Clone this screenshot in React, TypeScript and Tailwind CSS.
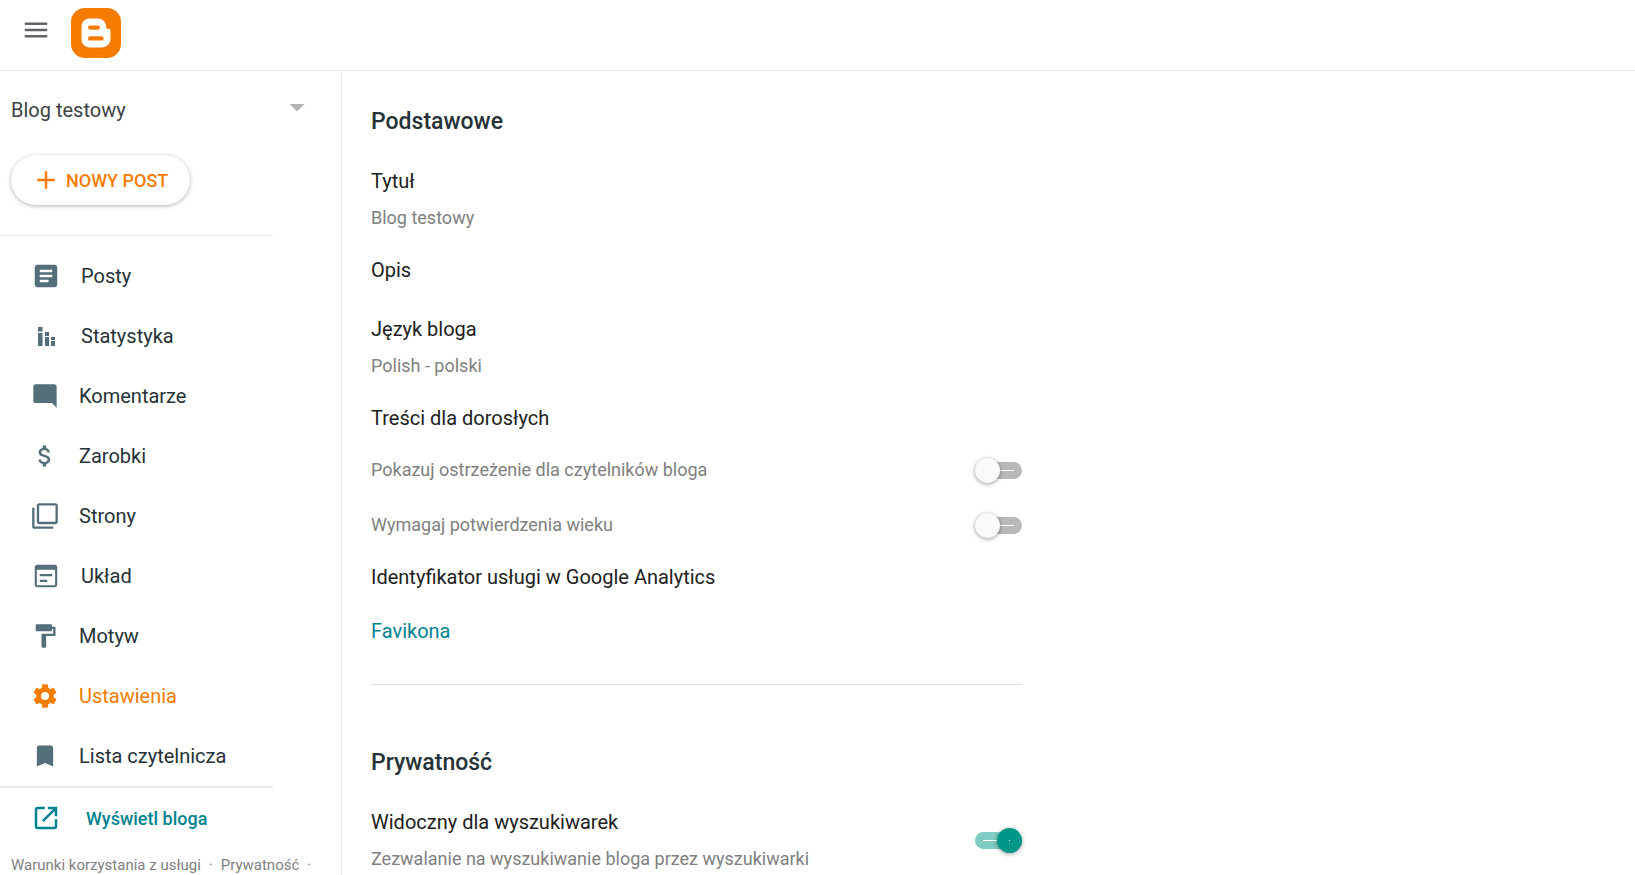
import { useState } from 'react';
import type { ReactNode } from 'react';
import {
  MdAdd,
  MdArrowDropDown,
  MdArticle,
  MdAttachMoney,
  MdBookmark,
  MdFilterNone,
  MdFormatPaint,
  MdMenu,
  MdModeComment,
} from 'react-icons/md';

function BloggerLogo() {
  return (
    <svg className="w-[50px] h-[50px]" viewBox="0 0 50 50" aria-hidden="true">
      <rect width="50" height="50" rx="14" fill="#f57c00" />
      <path
        fill="#b85c00"
        opacity="0.35"
        transform="translate(0 1)"
        d="M18.500 10.500h8c4.700 0 8.700 3.500 8.700 8.200v.8c0 .8.500 1.300 1.300 1.300h1c1.200 0 2 .8 2 2V31c0 4.700-3.800 8.500-8.500 8.500H18.500c-4.700 0-8-3.800-8-8.500V19c0-4.700 3.300-8.500 8-8.500z"
      />
      <path
        fill="#fff"
        d="M18.500 10.500h8c4.700 0 8.700 3.500 8.700 8.200v.8c0 .8.500 1.300 1.300 1.300h1c1.200 0 2 .8 2 2V31c0 4.700-3.800 8.500-8.500 8.500H18.500c-4.700 0-8-3.800-8-8.500V19c0-4.700 3.300-8.500 8-8.500z"
      />
      <rect x="17" y="17.500" width="12" height="4.200" rx="2.100" fill="#f57c00" />
      <rect x="17" y="28.200" width="15.600" height="4.400" rx="2.200" fill="#f57c00" />
    </svg>
  );
}

function StatsIcon({ className }: { className?: string }) {
  return (
    <svg className={className} viewBox="0 0 30 30" fill="currentColor" aria-hidden="true">
      <path d="M7 6h4.500v4.500H7zM7 12h4.500v13H7zM14 11h4v4h-4zM14 16h4v9h-4zM20 16h4v3h-4zM20 20h4v5h-4z" />
    </svg>
  );
}

function LayoutIcon({ className }: { className?: string }) {
  return (
    <svg className={className} viewBox="0 0 24 24" fill="currentColor" aria-hidden="true">
      <path
        fillRule="evenodd"
        d="M19 3H5c-1.100 0-2 .9-2 2v14c0 1.100.9 2 2 2h14c1.100 0 2-.9 2-2V5c0-1.100-.9-2-2-2zm.3 16.300H4.700V7h14.600v12.300zM7 10.300h10v1.800H7zM7 15h6v1.800H7z"
      />
    </svg>
  );
}

function SettingsIcon({ className }: { className?: string }) {
  return (
    <svg className={className} viewBox="0 0 24 24" fill="currentColor" aria-hidden="true">
      <path d="M19.430 12.980c.04-.32.070-.64.070-.98s-.03-.66-.07-.98l2.110-1.650c.19-.15.240-.42.120-.64l-2-3.460c-.12-.22-.39-.3-.61-.22l-2.490 1c-.52-.4-1.080-.73-1.690-.98l-.38-2.650C14.460 2.180 14.250 2 14 2h-4c-.25 0-.46.180-.49.420l-.38 2.650c-.61.250-1.170.590-1.690.980l-2.490-1c-.23-.09-.49 0-.61.220l-2 3.460c-.13.220-.07.490.120.640l2.110 1.650c-.04.320-.07.650-.07.980s.03.660.070.980l-2.110 1.650c-.19.150-.24.420-.12.640l2 3.460c.12.220.39.300.61.220l2.490-1c.52.400 1.080.730 1.690.980l.38 2.650c.03.240.24.420.49.420h4c.25 0 .46-.18.490-.42l.38-2.650c.61-.25 1.170-.59 1.690-.98l2.490 1c.23.090.49 0 .61-.22l2-3.460c.12-.22.070-.49-.12-.64l-2.110-1.650zM12 15.500c-1.930 0-3.500-1.570-3.500-3.500s1.570-3.500 3.500-3.500 3.500 1.570 3.500 3.500-1.570 3.500-3.500 3.500z" />
    </svg>
  );
}

function OpenIcon({ className }: { className?: string }) {
  return (
    <svg className={className} viewBox="0 0 24 24" fill="currentColor" aria-hidden="true">
      <path d="M19 19H5V5h6V3H5c-1.110 0-2 .9-2 2v14c0 1.100.890 2 2 2h14c1.100 0 2-.9 2-2v-6h-2v6zM13.500 3v2h4.090L8.760 13.830l1.410 1.410L19 6.410V10.500h2V3h-7.500z" />
    </svg>
  );
}

const smallIcon = 'w-7 h-7 shrink-0';
const largeIcon = 'w-[30px] h-[30px] shrink-0';

const navItems: { label: string; icon: ReactNode }[] = [
  { label: 'Posty', icon: <MdArticle className={largeIcon} /> },
  { label: 'Statystyka', icon: <StatsIcon className={largeIcon} /> },
  { label: 'Komentarze', icon: <MdModeComment className={smallIcon} /> },
  { label: 'Zarobki', icon: <MdAttachMoney className={smallIcon} /> },
  { label: 'Strony', icon: <MdFilterNone className={smallIcon} /> },
  { label: 'Układ', icon: <LayoutIcon className={largeIcon} /> },
  { label: 'Motyw', icon: <MdFormatPaint className={smallIcon} /> },
  { label: 'Ustawienia', icon: <SettingsIcon className={smallIcon} /> },
  { label: 'Lista czytelnicza', icon: <MdBookmark className={smallIcon} /> },
];

function Toggle({ id, defaultChecked = false }: { id: string; defaultChecked?: boolean }) {
  const [on, setOn] = useState(defaultChecked);

  return (
    <span className="relative flex items-center w-[47px] h-[25px] shrink-0">
      <input
        id={id}
        type="checkbox"
        role="switch"
        checked={on}
        onChange={(e) => setOn(e.target.checked)}
        className="absolute inset-0 z-10 w-full h-full opacity-0 cursor-pointer"
      />
      <span
        className={`flex items-center w-full h-[17px] px-2 rounded-full ${
          on ? 'bg-[#80cbc4]' : 'justify-end bg-[#b9b9b9]'
        }`}
      >
        <span className="w-[15px] h-px bg-white" />
      </span>
      <span
        className={`absolute top-0 flex items-center justify-center w-[25px] h-[25px] rounded-full shadow-[0_1px_4px_rgba(0,0,0,0.4)] ${
          on ? 'right-0 bg-[#009688]' : 'left-0 bg-[#fafafa]'
        }`}
      >
        <span className="w-px h-px bg-white" />
      </span>
    </span>
  );
}

function Setting({ title, value }: { title: string; value?: string }) {
  return (
    <button type="button" className="block w-full text-left">
      <span className="block text-[20px] leading-6 text-[#212121]">{title}</span>
      {value && <span className="block mt-[13px] text-[18px] leading-6 text-[#808080]">{value}</span>}
    </button>
  );
}

export default function App() {
  const [active, setActive] = useState('Ustawienia');

  return (
    <div className="flex flex-col min-h-screen bg-white font-[Roboto,sans-serif]">
      <header className="flex items-start h-[71px] pt-2 pl-[21px] gap-5 border-b border-[#e8eaed]">
        <button type="button" aria-label="Menu główne" className="mt-[7px] text-[#5f6368]">
          <MdMenu className="w-[30px] h-[30px]" />
        </button>
        <a href="#" aria-label="Blogger">
          <BloggerLogo />
        </a>
      </header>

      <div className="flex grow">
        <aside className="flex flex-col w-[342px] shrink-0 border-r border-[#e8eaed]">
          <div className="relative flex items-center mt-6 ml-[11px] mr-[26px] h-[30px]">
            <select
              aria-label="Wybierz bloga"
              className="w-full appearance-none bg-transparent text-[20px] leading-6 text-[#3c4043]"
            >
              <option>Blog testowy</option>
            </select>
            <MdArrowDropDown className="absolute right-0 bottom-0 w-9 h-9 text-[#b3b3b3] pointer-events-none" />
          </div>

          <button
            type="button"
            className="flex items-center mt-[30px] ml-[11px] pl-5 pr-[22px] h-[50px] gap-[5px] self-start rounded-full bg-white text-[18px] font-medium text-[#f57c00] shadow-[0_1px_4px_rgba(0,0,0,0.3)]"
          >
            <MdAdd className="w-[30px] h-[30px]" />
            NOWY POST
          </button>

          <nav className="w-[273px] mt-[30px] pt-[10px] border-t border-[#e8eaed]">
            {navItems.map(({ label, icon }) => (
              <a
                key={label}
                href="#"
                onClick={() => setActive(label)}
                aria-current={active === label ? 'page' : undefined}
                className={`flex items-center h-[60px] pl-[31px] gap-5 text-[20px] ${
                  active === label ? 'text-[#f57c00]' : 'text-[#546e7a]'
                }`}
              >
                {icon}
                <span className={active === label ? '' : 'text-[#263238]'}>{label}</span>
              </a>
            ))}
          </nav>

          <a
            href="#"
            className="flex items-center w-[273px] h-[62px] pl-[31px] gap-[25px] border-t-2 border-[#e8eaed] text-[18px] font-medium text-[#00838f]"
          >
            <OpenIcon className={largeIcon} />
            Wyświetl bloga
          </a>

          <footer className="flex items-center pl-[11px] pt-[7px] gap-2 text-[15px] leading-5 text-[#808080]">
            <a href="#">Warunki korzystania z usługi</a>
            <span>·</span>
            <a href="#">Prywatność</a>
            <span>·</span>
          </footer>
        </aside>

        <main className="grow pl-[29px] pr-6 pt-[37px]">
          <div className="max-w-[651px]">
            <section className="pb-[41px] border-b border-[#dadce0]">
              <h2 className="mb-[33px] text-[23px] leading-7 font-medium text-[#263238]">Podstawowe</h2>
              <Setting title="Tytuł" value="Blog testowy" />
              <div className="mt-7 mb-[35px]">
                <Setting title="Opis" />
              </div>
              <Setting title="Język bloga" value="Polish - polski" />

              <h3 className="my-7 text-[20px] leading-6 text-[#212121]">Treści dla dorosłych</h3>
              <div className="flex items-center justify-between h-6">
                <label htmlFor="adult-warning" className="text-[18px] leading-6 text-[#808080]">
                  Pokazuj ostrzeżenie dla czytelników bloga
                </label>
                <Toggle id="adult-warning" />
              </div>
              <div className="flex items-center justify-between h-6 mt-[31px] mb-7">
                <label htmlFor="adult-age" className="text-[18px] leading-6 text-[#808080]">
                  Wymagaj potwierdzenia wieku
                </label>
                <Toggle id="adult-age" />
              </div>

              <Setting title="Identyfikator usługi w Google Analytics" />
              <a href="#" className="block mt-[30px] text-[20px] leading-6 text-[#00838f]">
                Favikona
              </a>
            </section>

            <section className="pt-16">
              <h2 className="mb-[33px] text-[23px] leading-7 font-medium text-[#263238]">Prywatność</h2>
              <div className="flex items-center justify-between">
                <label htmlFor="search-visible">
                  <span className="block text-[20px] leading-6 text-[#212121]">Widoczny dla wyszukiwarek</span>
                  <span className="block mt-[13px] text-[18px] leading-6 text-[#808080]">
                    Zezwalanie na wyszukiwanie bloga przez wyszukiwarki
                  </span>
                </label>
                <Toggle id="search-visible" defaultChecked />
              </div>
            </section>
          </div>
        </main>
      </div>
    </div>
  );
}
